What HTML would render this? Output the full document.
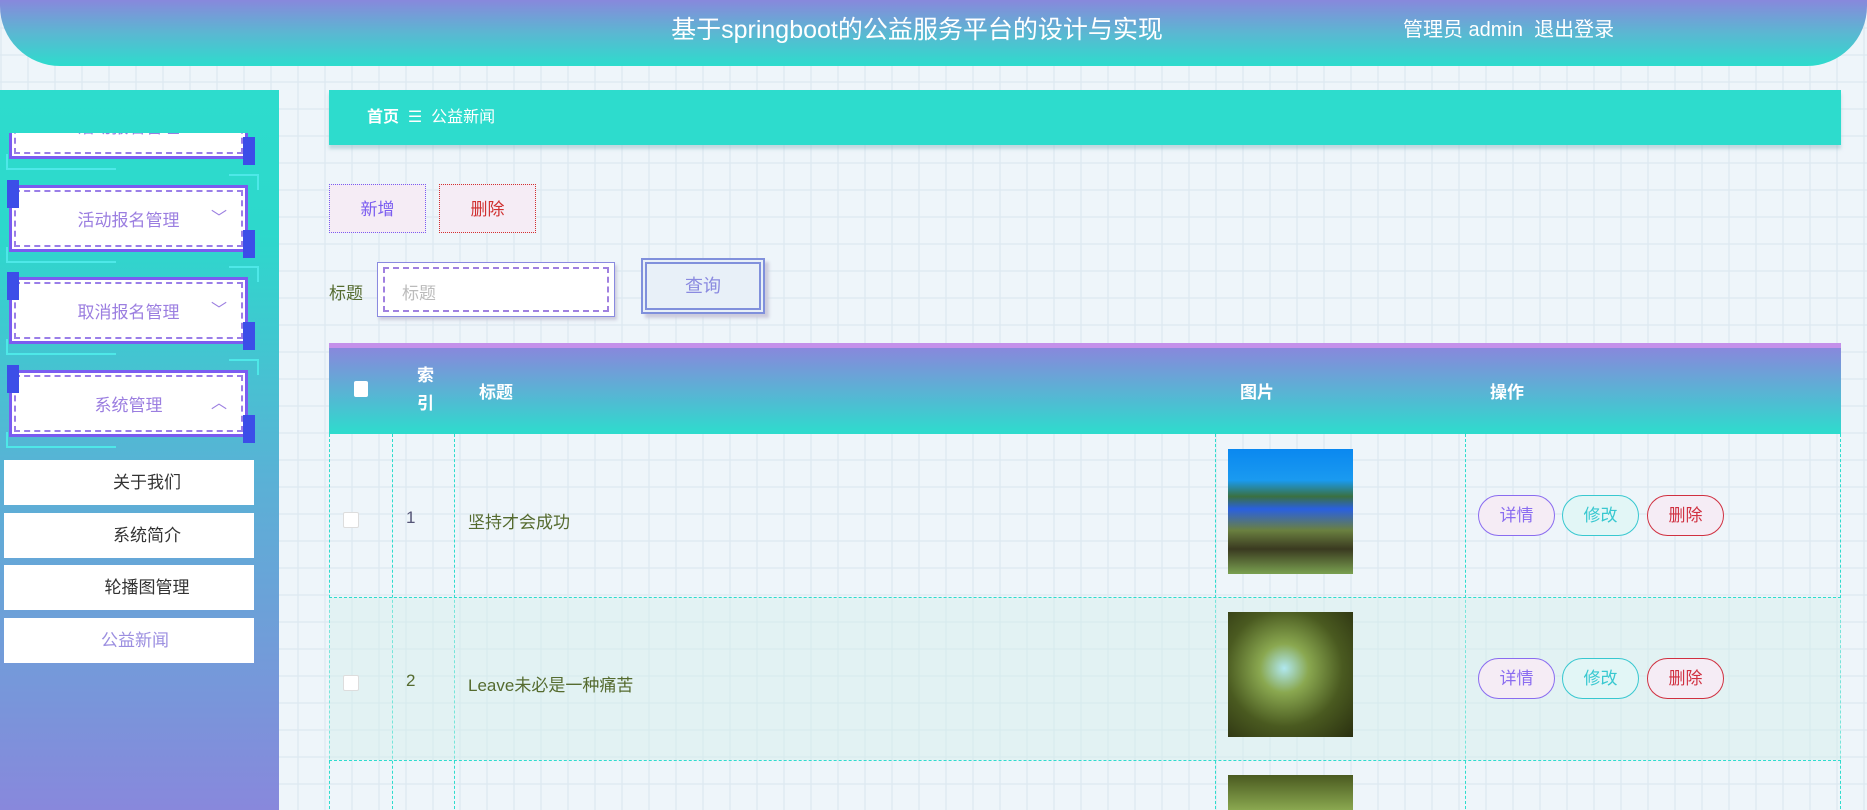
<!DOCTYPE html>
<html style="overflow:hidden;width:1867px;height:810px"><head><meta charset="utf-8"><style>
*{margin:0;padding:0;box-sizing:border-box}
body{width:1867px;height:810px;overflow:hidden;position:relative;font-family:"Liberation Sans","Noto Sans CJK SC",sans-serif;
background-color:#eef5fa;
background-image:linear-gradient(rgba(220,232,240,.6) 2px,transparent 2px),linear-gradient(90deg,rgba(220,232,240,.6) 2px,transparent 2px);
background-size:27px 27px}
.hdr{position:absolute;left:0;top:0;width:1867px;height:66px;border-radius:0 0 60px 60px;background:linear-gradient(#8888dc,#5bb7d2 50%,#2ddccd)}
.hdr .t{position:absolute;left:0;width:1834px;text-align:center;top:10px;color:#fff;font-size:25px}
.hdr .r{position:absolute;left:1403px;top:13px;color:#fff;font-size:20px}
.side{position:absolute;left:0;top:90px;width:279px;height:720px;background:linear-gradient(#2ddccd,#2dd8cc 20%,#5bb0d6 55%,#8888dc)}
.clip{position:absolute;left:0;top:43px;width:279px;height:677px;overflow:hidden}
.mi{position:absolute;left:9px;width:239px;height:67px;background:#fff;border:3px solid #7a5cf0}
.mi:before{content:"";position:absolute;left:2px;top:2px;right:2px;bottom:2px;border:2px dashed #9a7ee8}
.mi .c1{position:absolute;left:-5px;top:-8px;width:12px;height:28px;background:#3c4ee8}
.mi .c2{position:absolute;right:-10px;bottom:-9px;width:12px;height:28px;background:#3c4ee8}
.mi .l{position:absolute;left:-6px;bottom:-14px;width:110px;height:16px;border-left:2px solid #4ee8e8;border-bottom:2px solid #4ee8e8}
.mi .l2{position:absolute;right:-14px;top:-14px;width:30px;height:16px;border-top:2px solid #4ee8e8;border-right:2px solid #4ee8e8}
.mi span{position:absolute;left:0;right:0;top:18px;text-align:center;color:#9b7ee0;font-size:17px}
.mi i{position:absolute;right:18px;top:16px;color:#9b7ee0;font-style:normal;font-size:16px}
.sub{position:absolute;left:4px;width:250px;height:45px;background:#fff;text-align:center;line-height:45px;font-size:17px;color:#333;padding-left:36px}
.bc{position:absolute;left:329px;top:90px;width:1512px;height:55px;background:#2ddccd;box-shadow:0 4px 3px rgba(150,190,200,.5);color:#fff;font-size:16px;line-height:55px;padding-left:38px}
.btn{position:absolute;top:184px;width:97px;height:49px;background:#f5ecf5;text-align:center;line-height:49px;font-size:17px}
.tbl{position:absolute;left:329px;top:343px;width:1512px;height:467px;border-top:5px solid #c490ea;overflow:hidden}
.th{position:absolute;top:0;height:86px;background:linear-gradient(#8888dc,#2ddccd);color:#fff;font-weight:bold;font-size:17px}
.vl{position:absolute;top:86px;height:380px;border-left:1px dashed #2ddccd}
.hl{position:absolute;left:0;width:1512px;border-top:1px dashed #2ddccd}
.cb{position:absolute;left:14px;width:16px;height:16px;background:#fff;border:1px solid #ddd;border-radius:2px}
.txt{position:absolute;color:#556b2f;font-size:17px}
.img{position:absolute;left:899px;width:125px;height:125px}
.ob{position:absolute;width:77px;height:41px;border-radius:21px;text-align:center;line-height:39px;font-size:17px;border:1px solid}
</style></head><body>
<div class="hdr"><div class="t">基于springboot的公益服务平台的设计与实现</div><div class="r">管理员 admin&nbsp; 退出登录</div></div>
<div class="side"><div class="clip">
<div class="mi" style="top:-41px"><div class="c2"></div><div class="l"></div><span>活动报名管理</span></div>
<div class="mi" style="top:52px"><div class="c1"></div><div class="c2"></div><div class="l"></div><div class="l2"></div><span>活动报名管理</span><i>﹀</i></div>
<div class="mi" style="top:144px"><div class="c1"></div><div class="c2"></div><div class="l"></div><div class="l2"></div><span>取消报名管理</span><i>﹀</i></div>
<div class="mi" style="top:237px"><div class="c1"></div><div class="c2"></div><div class="l"></div><div class="l2"></div><span>系统管理</span><i>︿</i></div>
<div class="sub" style="top:327px">关于我们</div>
<div class="sub" style="top:380px">系统简介</div>
<div class="sub" style="top:432px">轮播图管理</div>
<div class="sub" style="top:485px;color:#9b8ee0;padding-left:12px">公益新闻</div>
</div></div>
<div class="bc"><b>首页</b>&nbsp; ☰&nbsp; 公益新闻</div>
<div class="btn" style="left:329px;border:1px dotted #7a5cf0;color:#7a5cf0">新增</div>
<div class="btn" style="left:439px;border:1px dotted #d03030;color:#d03030">删除</div>
<div style="position:absolute;left:329px;top:279px;font-size:17px;color:#556b2f">标题</div>
<div style="position:absolute;left:377px;top:262px;width:238px;height:55px;background:#fff;border:1px solid #8a8ae0;box-shadow:2px 3px 3px #ccd">
<div style="position:absolute;left:5px;top:4px;right:5px;bottom:4px;border:2px dashed #a080e0"></div>
<span style="position:absolute;left:24px;top:16px;color:#bbb;font-size:17px">标题</span></div>
<div style="position:absolute;left:641px;top:258px;width:124px;height:56px;background:#e8f0f8;border:6px double #8090dc;box-shadow:4px 4px 3px #ccd;text-align:center;line-height:44px;color:#8a8ae0;font-size:18px">查询</div>
<div class="tbl">
<div class="th" style="left:0;width:63px"><div style="position:absolute;left:25px;top:33px;width:14px;height:16px;background:#fff;border-radius:2px"></div></div>
<div class="th" style="left:63px;width:62px;padding:14px 0 0 25px;line-height:28px">索<br>引</div>
<div class="th" style="left:125px;width:761px;padding:30px 0 0 25px">标题</div>
<div class="th" style="left:886px;width:250px;padding:30px 0 0 25px">图片</div>
<div class="th" style="left:1136px;width:376px;padding:30px 0 0 25px">操作</div>
<div class="vl" style="left:0"></div><div class="vl" style="left:63px"></div><div class="vl" style="left:125px"></div><div class="vl" style="left:886px"></div><div class="vl" style="left:1136px"></div><div class="vl" style="left:1511px"></div>
<div style="position:absolute;left:0;top:249px;width:1512px;height:163px;background:rgba(210,240,235,.45)"></div>
<div class="hl" style="top:249px"></div><div class="hl" style="top:412px"></div>
<div class="cb" style="top:164px"></div><div class="cb" style="top:327px"></div>
<div class="txt" style="left:77px;top:160px;color:#557">1</div><div class="txt" style="left:77px;top:323px">2</div>
<div class="txt" style="left:139px;top:160px">坚持才会成功</div><div class="txt" style="left:139px;top:323px">Leave未必是一种痛苦</div>
<div class="img" style="top:101px;background:linear-gradient(#0a88f0 0,#1a9af0 25%,#3a7040 38%,#2a60e0 48%,#6a8040 65%,#3a3a20 80%,#7aa050)"></div>
<div class="img" style="top:264px;background:radial-gradient(circle at 45% 45%,#b0e8f0 0,#8aa850 25%,#4a5a20 60%,#2a3010)"></div>
<div class="img" style="top:427px;height:35px;background:linear-gradient(#4a5a20,#8aa850)"></div>
<div class="ob" style="left:1149px;top:147px;border-color:#8a6cf0;color:#8a6cf0;background:#f5ecf5">详情</div>
<div class="ob" style="left:1233px;top:147px;border-color:#38c8d0;color:#38c8d0;background:#e2f6f6">修改</div>
<div class="ob" style="left:1318px;top:147px;border-color:#d03040;color:#d03040;background:#f5ecf5">删除</div>
<div class="ob" style="left:1149px;top:310px;border-color:#8a6cf0;color:#8a6cf0;background:#f5ecf5">详情</div>
<div class="ob" style="left:1233px;top:310px;border-color:#38c8d0;color:#38c8d0;background:#e2f6f6">修改</div>
<div class="ob" style="left:1318px;top:310px;border-color:#d03040;color:#d03040;background:#f5ecf5">删除</div>
</div>
</body></html>
